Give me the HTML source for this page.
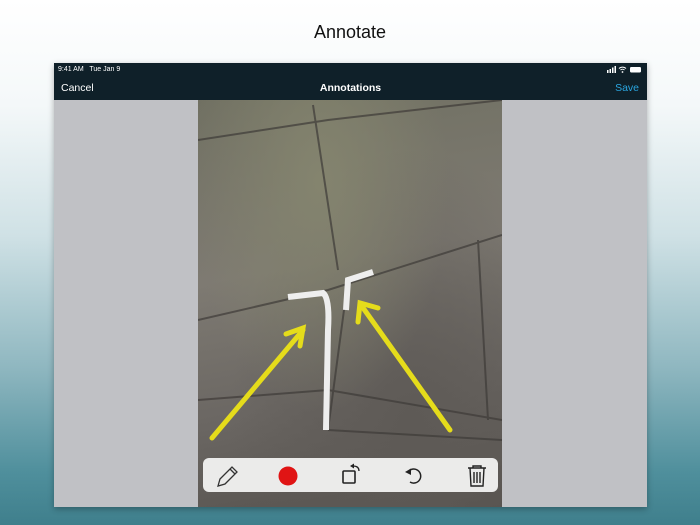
<!DOCTYPE html>
<html><head><style>
body{margin:0;width:700px;height:525px;overflow:hidden;position:relative;font-family:"Liberation Sans",sans-serif;
background:linear-gradient(180deg,#ffffff 0%,#f4f8f9 20%,#cfe1e5 45%,#8fb7c0 70%,#4f8f9c 90%,#3f7f8c 100%);}
h1{position:absolute;top:22px;left:0;width:700px;text-align:center;margin:0;font-size:18px;font-weight:normal;color:#111;}
.scr{position:absolute;left:54px;top:63px;width:593px;height:444px;background:#c0c1c5;overflow:hidden;box-shadow:0 2px 6px rgba(0,0,0,.3)}
.sb{position:absolute;left:0;top:0;width:593px;height:37px;background:#0f2029;color:#fff}
.t{position:absolute;font-size:7px;top:3px}
.nav{position:absolute;top:19px;font-size:10.5px}
.photo{position:absolute;left:144px;top:37px;width:304px;height:407px;background:
radial-gradient(ellipse at 40% 20%,#84846e 0%,transparent 50%),
radial-gradient(ellipse at 70% 80%,#5e5a56 0%,transparent 60%),
linear-gradient(170deg,#707062,#7e7a72 40%,#6b6763 70%,#55514d)}
.tb{position:absolute;left:149px;top:395px;width:295px;height:34px;background:#ebebea;border-radius:6px}
</style></head><body>
<h1>Annotate</h1>
<div class="scr">
<div class="sb">
<span class="t" style="left:4px">9:41 AM&nbsp;&nbsp; Tue Jan 9</span>
<svg style="position:absolute;right:4px;top:3px" width="36" height="7"><rect x="0" y="4" width="1.5" height="3" fill="#fff"/><rect x="2.5" y="3" width="1.5" height="4" fill="#fff"/><rect x="5" y="1.5" width="1.5" height="5.5" fill="#fff"/><rect x="7.5" y="0" width="1.5" height="7" fill="#fff"/><path d="M12 2.5a5 5 0 0 1 7 0M13.5 4a3 3 0 0 1 4 0" stroke="#fff" fill="none"/><circle cx="15.5" cy="6" r=".9" fill="#fff"/><rect x="23" y="1" width="11" height="5.5" rx="1.2" fill="#fff"/></svg>
<span class="nav" style="left:7px">Cancel</span>
<span class="nav" style="left:0;width:593px;text-align:center;font-weight:bold">Annotations</span>
<span class="nav" style="right:8px;color:#2aa6e0">Save</span>
</div>
<div class="photo">
<svg width="304" height="407" style="position:absolute;left:0;top:0">
<g stroke="#3e3b38" stroke-width="2" fill="none" opacity=".7">
<path d="M0 40 L130 20 L304 0"/><path d="M0 220 L130 190 L304 135"/><path d="M115 5 L140 170"/><path d="M150 180 L130 330"/><path d="M280 140 L290 320"/><path d="M0 300 L130 290 L304 320"/><path d="M130 330 L304 340"/>
</g>
<path d="M90 197 L125 193 Q132 198 130 230 L128 330" stroke="#eee" stroke-width="6" fill="none"/>
<path d="M148 210 L150 180 L175 172" stroke="#eee" stroke-width="6" fill="none"/>
<g stroke="#e5dc1b" stroke-width="5" fill="none" stroke-linecap="round">
<path d="M14 338 L105 230"/><path d="M88 234 L105 228 L102 246"/>
<path d="M252 330 L163 205"/><path d="M160 222 L162 203 L180 208"/>
</g>
</svg>
</div>
<div class="tb">
<svg width="295" height="34">
<path d="M15 28 L17 21 L29 9 L34 14 L22 26 Z M27 11 L32 16" stroke="#333" stroke-width="1.3" fill="none"/>
<circle cx="85" cy="18" r="9.5" fill="#e01414"/>
<rect x="140" y="13" width="12" height="12" rx="1" stroke="#222" stroke-width="1.6" fill="none"/>
<path d="M150 8 Q156 8 156 13" stroke="#222" stroke-width="1.3" fill="none"/><path d="M147 8 L151 5.5 L151 10.5Z" fill="#222"/>
<path d="M205 14 A7 7 0 1 1 207 24" stroke="#222" stroke-width="1.5" fill="none"/><path d="M202 14 L208 10.5 L208 17Z" fill="#222"/>
<path d="M265 10 H283 M270 10 V8 H278 V10 M267 10 L268 28 H280 L281 10 M271 14 V25 M274 14 V25 M277 14 V25" stroke="#222" stroke-width="1.4" fill="none"/>
</svg>
</div>
</div>
</body></html>
